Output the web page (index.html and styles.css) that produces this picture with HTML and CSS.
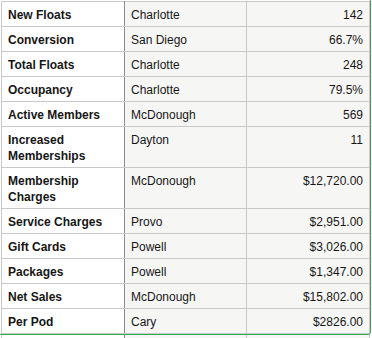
FILE: index.html
```html
<!DOCTYPE html>
<html>
<head>
<meta charset="utf-8">
<link rel="stylesheet" href="styles.css">
</head>
<body>
<div class="sheet">
  <table class="grid">
    <colgroup>
      <col class="c1"><col class="c2"><col class="c3">
    </colgroup>
    <tbody>
      <tr><th>New Floats</th><td>Charlotte</td><td class="num">142</td></tr>
      <tr><th>Conversion</th><td>San Diego</td><td class="num">66.7%</td></tr>
      <tr><th>Total Floats</th><td>Charlotte</td><td class="num">248</td></tr>
      <tr><th>Occupancy</th><td>Charlotte</td><td class="num">79.5%</td></tr>
      <tr><th>Active Members</th><td>McDonough</td><td class="num">569</td></tr>
      <tr><th>Increased Memberships</th><td>Dayton</td><td class="num">11</td></tr>
      <tr><th>Membership Charges</th><td>McDonough</td><td class="num">$12,720.00</td></tr>
      <tr><th>Service Charges</th><td>Provo</td><td class="num">$2,951.00</td></tr>
      <tr><th>Gift Cards</th><td>Powell</td><td class="num">$3,026.00</td></tr>
      <tr><th>Packages</th><td>Powell</td><td class="num">$1,347.00</td></tr>
      <tr><th>Net Sales</th><td>McDonough</td><td class="num">$15,802.00</td></tr>
      <tr><th>Per Pod</th><td>Cary</td><td class="num">$2826.00</td></tr>
      <tr class="empty"><th></th><td></td><td></td></tr>
    </tbody>
  </table>
  <div class="selection"></div>
</div>
</body>
</html>
```
FILE: styles.css
```css
html, body {
  margin: 0;
  padding: 0;
  background: #ffffff;
}
html {
  height: 338px;
  overflow: hidden;
}
body {
  font-family: "Liberation Sans", Arial, Helvetica, sans-serif;
  font-size: 12px;
  color: #161616;
}
.sheet {
  position: relative;
  height: 337px;
  overflow: hidden;
  padding: 1px 0 0 1px;
}
.grid {
  border-collapse: collapse;
  table-layout: fixed;
  width: 369px;
}
.c1 { width: 123px; }
.c2 { width: 122px; }
.c3 { width: 123px; }
.grid th,
.grid td {
  border: 1px solid #c9c9c9;
  padding: 5px 6px 3px 6px;
  line-height: 16px;
  vertical-align: top;
  text-align: left;
  overflow: hidden;
}
.grid th {
  font-weight: bold;
  background: #ffffff;
  border-right: 1px solid #8e8e8e;
}
.grid td {
  background: #f6f6f5;
  font-weight: normal;
  white-space: nowrap;
}
.grid td.num {
  text-align: right;
}
.grid .empty th,
.grid .empty td {
  height: 16px;
}
.selection {
  position: absolute;
  left: -2px;
  top: -2px;
  width: 371px;
  height: 335px;
  border: 1px solid #35a853;
  border-radius: 3px;
  pointer-events: none;
}
```
